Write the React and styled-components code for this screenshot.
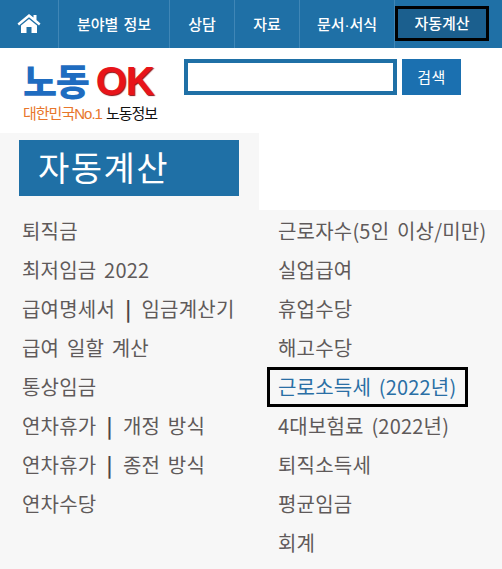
import React from "react";
import styled, { createGlobalStyle } from "styled-components";

const Global = createGlobalStyle`
  html, body { margin: 0; padding: 0; background: #fff; }
  body { font-family: "Liberation Sans", "Noto Sans CJK KR", sans-serif; }
`;
const Page = styled.div`
  width: 502px; height: 569px; overflow: hidden; background: #fff;
`;
const Nav = styled.nav`
  display: flex; height: 48px; background: #1f70a6;
`;
const NavItem = styled.a`
  box-sizing: border-box;
  width: ${p => p.$w}px;
  display: flex; align-items: center; justify-content: center;
  border-right: 1px solid #3f86b6;
  color: #fff; font-size: 15px; font-weight: 500; word-spacing: 1px;
  font-family: "Liberation Sans", "Noto Sans CJK KR", sans-serif;
  padding-bottom: 2px;
`;
const ActiveItem = styled.a`
  box-sizing: border-box;
  width: 94px; height: 35px; margin: 6px 1px 0 0;
  display: flex; align-items: center; justify-content: center;
  background: #1b5f8e;
  border: 3px solid #000;
  color: #fff; font-size: 15px; font-weight: 500;
  font-family: "Noto Sans CJK KR", sans-serif;
  padding-bottom: 2px;
`;
const Header = styled.header`
  display: flex; height: 85px; background: #fff;
`;
const Logo = styled.div`
  width: 184px; box-sizing: border-box; padding: 11px 0 0 23px;
  display: flex; flex-direction: column;
`;
const LogoTop = styled.div`
  display: flex; align-items: center; height: 45px; line-height: 41px;
  font-family: "Liberation Sans", "Noto Sans CJK KR", sans-serif; font-weight: 900;
`;
const LogoKo = styled.span`
  color: #1f6cc0; font-size: 37px; letter-spacing: -1.2px; margin: 4px 7px 0 0;
`;
const LogoOk = styled.span`
  color: #e8141a; font-size: 40px; font-family: "Liberation Sans", sans-serif; font-weight: 700; letter-spacing: -1px;
  text-shadow: 1px 1px 1px #8a1014;
`;
const LogoSub = styled.div`
  display: flex; margin-top: 1px; font-size: 15px; line-height: 18px; letter-spacing: -1px; white-space: nowrap;
  font-family: "Liberation Sans", "Noto Sans CJK KR", sans-serif; color: #111;
`;
const Orange = styled.span`color: #e8762c; margin-right: 4px;`;
const Search = styled.form`
  display: flex; gap: 5px; padding-top: 11px; align-items: flex-start;
`;
const SearchInput = styled.input`
  box-sizing: border-box; width: 213px; height: 36px; padding: 0; background: #fff;
  border: 4px solid #1f70a6; outline: none; border-radius: 0;
`;
const SearchButton = styled.button`
  width: 59px; height: 36px; border: 0; padding: 0 0 2px; background: #1b70b0; color: #fff;
  font-size: 15px; letter-spacing: 0.5px; font-family: "Noto Sans CJK KR", sans-serif;
`;
const Band = styled.div`
  width: 259px; height: 77px; box-sizing: border-box; padding: 7px 0 0 19px; background: #f7f7f7;
`;
const Title = styled.h1`
  margin: 0; box-sizing: border-box; width: 220px; height: 56px; background: #1f70a6; color: #fff;
  padding: 0 0 3px 19px; display: flex; align-items: center;
  font-size: 34px; font-weight: 400; letter-spacing: 1.5px;
  font-family: "Noto Sans CJK KR", sans-serif;
`;
const Body = styled.main`
  display: grid; grid-template-columns: 256px 1fr; height: 359px; background: #f7f7f7;
  padding-left: 22px; padding-top: 2px; box-sizing: border-box;
`;
const Column = styled.ul`
  list-style: none; margin: 0; padding: 0; display: flex; flex-direction: column;
`;
const Item = styled.li`
  position: relative; height: 39px; line-height: 37px; white-space: nowrap;
  font-size: 20px; font-weight: 400; letter-spacing: 0.2px; word-spacing: 3px;
  color: ${p => p.$active ? "#2a6fa5" : "#5f5a5a"};
  font-family: "Noto Sans CJK KR", sans-serif;
`;
const Bar = styled.b`
  margin: 0 2.5px; font-weight: 700; color: #4a4646;
`;
const Mark = styled.span`
  position: absolute; left: -11px; top: -1px; width: 201px; height: 40px;
  box-sizing: border-box; border: 3px solid #000;
`;

const left = [
  ["퇴직금"], ["최저임금 2022"], ["급여명세서", "임금계산기"], ["급여 일할 계산"], ["통상임금"],
  ["연차휴가", "개정 방식"], ["연차휴가", "종전 방식"], ["연차수당"],
];
const right = ["근로자수(5인 이상/미만)","실업급여","휴업수당","해고수당","근로소득세 (2022년)","4대보험료 (2022년)","퇴직소득세","평균임금","회계"];

const HomeIcon = () => (
  <svg width="24" height="20" viewBox="0 0 24 20" fill="#fff">
    <path d="M12 1 L0.5 10.5 L2 12.5 L12 4.2 L22 12.5 L23.5 10.5 L19.5 7 V2 H16.5 V4.6 Z" />
    <path d="M12 6 L4 12.6 V20 H9.5 V14 H14.5 V20 H20 V12.6 Z" />
  </svg>
);

export default function App() {
  return (
    <Page>
      <Global />
      <Nav>
        <NavItem $w={59}><HomeIcon /></NavItem>
        <NavItem $w={111}>분야별 정보</NavItem>
        <NavItem $w={65}>상담</NavItem>
        <NavItem $w={65}>자료</NavItem>
        <NavItem $w={95}>문서·서식</NavItem>
        <ActiveItem>자동계산</ActiveItem>
      </Nav>
      <Header>
        <Logo>
          <LogoTop><LogoKo>노동</LogoKo><LogoOk>OK</LogoOk></LogoTop>
          <LogoSub><Orange>대한민국No.1</Orange>노동정보</LogoSub>
        </Logo>
        <Search>
          <SearchInput />
          <SearchButton type="button">검색</SearchButton>
        </Search>
      </Header>
      <Band><Title>자동계산</Title></Band>
      <Body>
        <Column>
          {left.map(([a, b]) => (
            <Item key={a + (b || "")}>{a}{b && <> <Bar>|</Bar> {b}</>}</Item>
          ))}
        </Column>
        <Column>
          {right.map(t => {
            const active = t.startsWith("근로소득세");
            return <Item key={t} $active={active}>{t}{active && <Mark />}</Item>;
          })}
        </Column>
      </Body>
    </Page>
  );
}
